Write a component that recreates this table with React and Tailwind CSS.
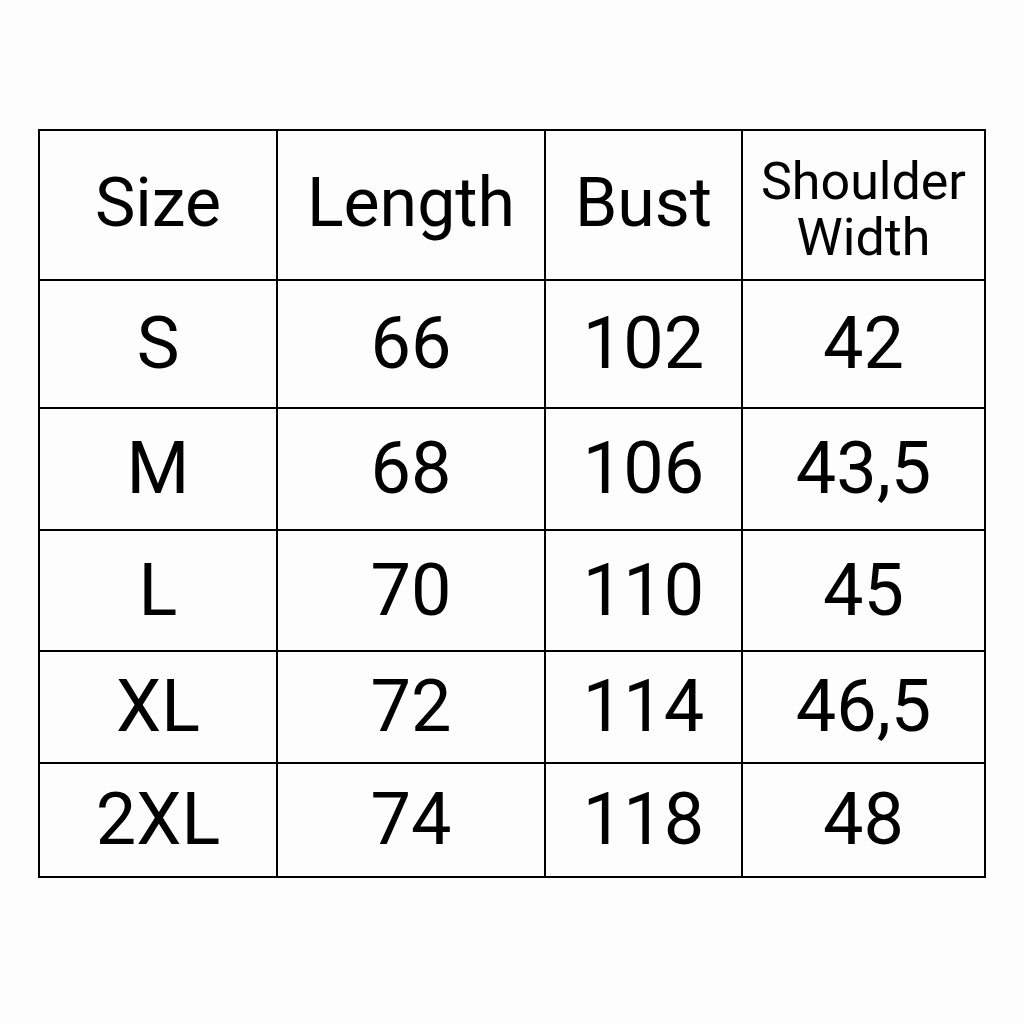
import React from "react";

const rows = [
  ["S", "66", "102", "42"],
  ["M", "68", "106", "43,5"],
  ["L", "70", "110", "45"],
  ["XL", "72", "114", "46,5"],
  ["2XL", "74", "118", "48"],
];

const rowH = ["h-[126px]", "h-[120px]", "h-[119px]", "h-[110px]", "h-[112px]"];

export default function App() {
  return (
    <div
      className="w-[1024px] h-[1024px] bg-[#fdfdfd] pt-[129px] pl-[38px]"
      style={{ fontFamily: "Roboto, 'Liberation Sans', sans-serif" }}
    >
      <div className="w-[948px] bg-black p-[2px] grid grid-cols-[236px_266px_195px_241px] gap-[2px] text-black">
        <div className="h-[148px] bg-[#fdfdfd] flex items-center justify-center text-[68px] leading-none pb-[4px]">Size</div>
        <div className="h-[148px] bg-[#fdfdfd] flex items-center justify-center text-[68px] leading-none pb-[4px]">Length</div>
        <div className="h-[148px] bg-[#fdfdfd] flex items-center justify-center text-[68px] leading-none pb-[4px]">Bust</div>
        <div className="h-[148px] bg-[#fdfdfd] flex flex-col items-center justify-center text-[52px] leading-[56px] pt-[10px]">
          <span>Shoulder</span>
          <span>Width</span>
        </div>
        {rows.map((r, i) =>
          r.map((c, j) => (
            <div
              key={i + "-" + j}
              className={`${rowH[i]} bg-[#fdfdfd] flex items-center justify-center text-[72px] leading-none`}
            >
              {c}
            </div>
          ))
        )}
      </div>
    </div>
  );
}
